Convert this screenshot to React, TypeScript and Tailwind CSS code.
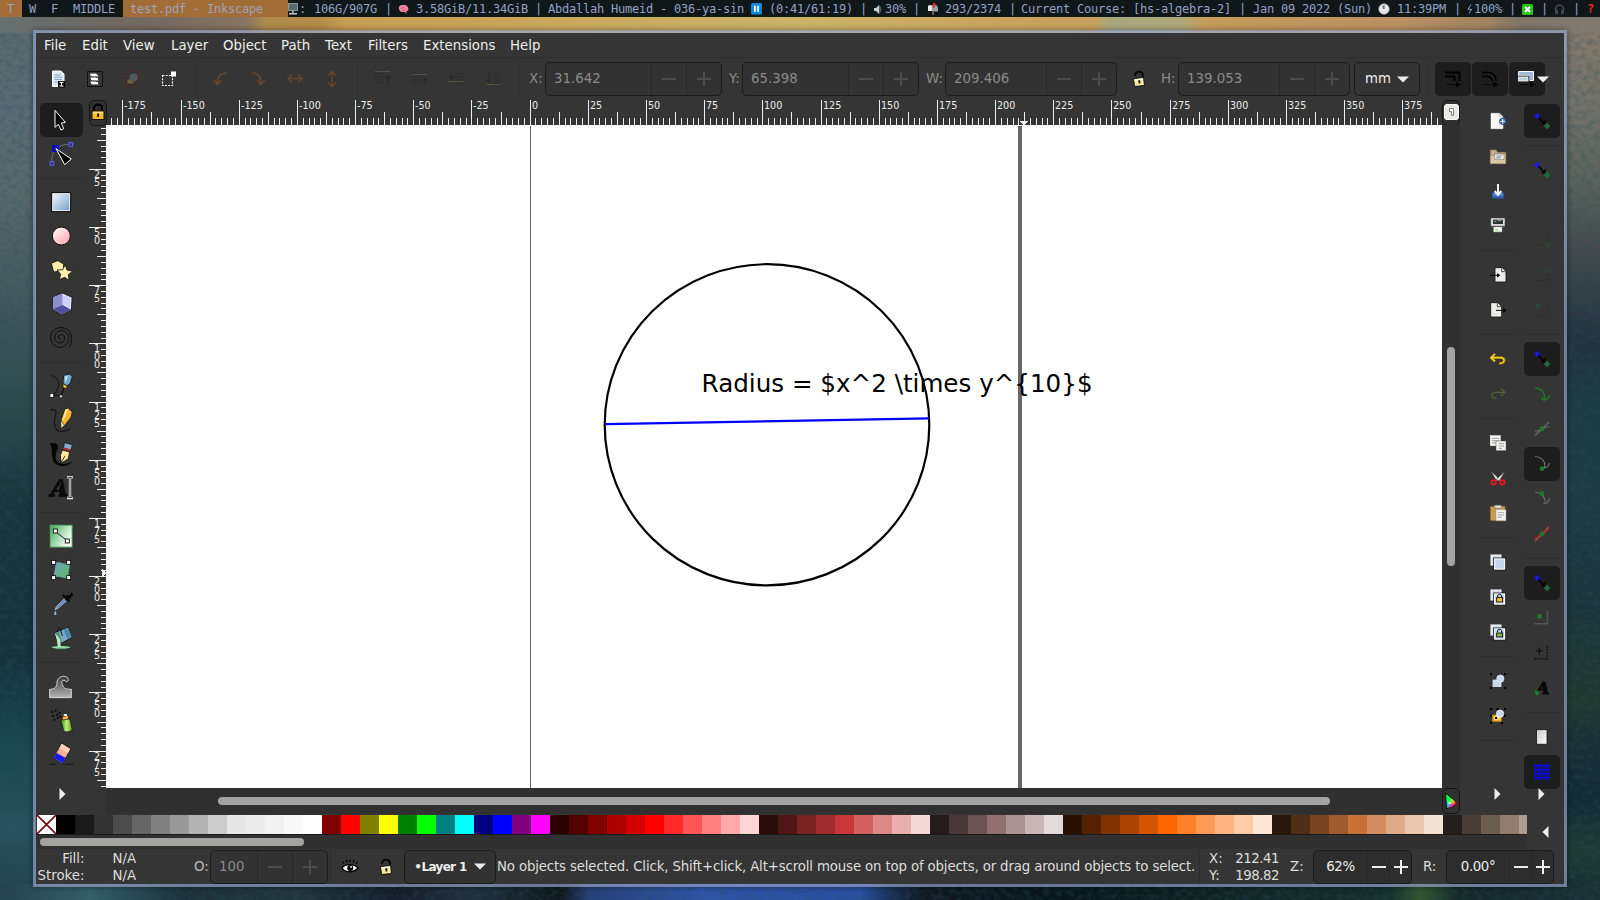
import React from "react";

type Kids = { children?: React.ReactNode };

const SANS = "font-['DejaVu_Sans',sans-serif]";

/* ---------- Wallpaper ---------- */

const stops = (list: [number, string][], span: number) =>
  list.map(([p, c]) => <stop key={p} offset={p / span} stopColor={c} />);

function Wallpaper() {
  return (
    <svg className="absolute inset-0" width="1600" height="900" aria-hidden="true">
      <defs>
        <linearGradient id="wl" x1="0" y1="0" x2="0" y2="1">
          {stops([[17, "#5d6a70"], [100, "#5c6c74"], [180, "#58696b"], [300, "#40575c"], [400, "#2b4a4b"], [500, "#17343a"], [650, "#14323a"], [740, "#1b464e"], [830, "#2a5160"], [900, "#22414c"]], 900)}
        </linearGradient>
        <linearGradient id="wt" x1="0" y1="0" x2="1" y2="0">
          {stops([[0, "#66706f"], [150, "#77695f"], [245, "#8a7560"], [265, "#b38c4a"], [320, "#b98d44"], [345, "#cda052"], [600, "#d0ae5e"], [800, "#d0b766"], [1000, "#cda75c"], [1095, "#c9a45c"], [1110, "#a9aa80"], [1180, "#b0aa7c"], [1205, "#c99e5a"], [1400, "#bd9262"], [1490, "#a08260"], [1520, "#7e7468"], [1600, "#807a70"]], 1600)}
        </linearGradient>
        <linearGradient id="wr" x1="0" y1="0" x2="0" y2="1">
          {stops([[17, "#857a6c"], [95, "#73726a"], [170, "#5b625c"], [230, "#484c4e"], [330, "#22323e"], [400, "#1c3c44"], [500, "#1d3c42"], [600, "#1b343a"], [700, "#20382e"], [730, "#1a3034"], [800, "#122a33"], [850, "#1f3c34"], [900, "#142a30"]], 900)}
        </linearGradient>
        <linearGradient id="wb" x1="0" y1="0" x2="1" y2="0">
          {stops([[0, "#24424c"], [90, "#35606c"], [180, "#1c3238"], [300, "#20343a"], [400, "#161c28"], [470, "#22303c"], [560, "#10181c"], [590, "#27407c"], [700, "#2f55a8"], [860, "#2a50a4"], [890, "#1a3058"], [925, "#101820"], [1060, "#08161a"], [1390, "#16302c"], [1420, "#35582c"], [1460, "#14282c"], [1600, "#1a3034"]], 1600)}
        </linearGradient>
        <filter id="paint" x="0" y="0" width="100%" height="100%">
          <feTurbulence type="fractalNoise" baseFrequency="0.16 0.2" numOctaves="4" seed="7" />
          <feColorMatrix values="0 0 0 0 0.02  0 0 0 0 0.08  0 0 0 0 0.1  1.6 0 0 0 -0.62" />
        </filter>
      </defs>
      <rect width="1600" height="900" fill="#1b343a" />
      <rect x="0" y="17" width="800" height="883" fill="url(#wl)" />
      <rect x="800" y="17" width="800" height="883" fill="url(#wr)" />
      <rect x="0" y="884" width="1600" height="16" fill="url(#wb)" />
      <rect width="1600" height="900" filter="url(#paint)" opacity="0.5" />
      <rect x="0" y="0" width="1600" height="33" fill="url(#wt)" opacity="0.95" />
    </svg>
  );
}

/* ---------- Status bar at the top of the screen ---------- */

const Pipe = () => <span>|</span>;

const Monitor = () => (
  <svg width="11" height="12" viewBox="0 0 11 12">
    <rect x="0.5" y="0.5" width="9" height="7" fill="#5c6b70" stroke="#8c9898" />
    <rect x="4" y="8" width="2" height="2" fill="#999" />
    <rect x="1" y="10" width="8" height="1.5" fill="#c5c5c5" />
  </svg>
);
const Brain = () => (
  <svg width="11" height="11" viewBox="0 0 11 11">
    <path d="M1 5C0 2 3 0.5 5.5 1C8 0.6 10.6 2.5 10.4 5.4C10 7 9 7.4 8 7.2L8.6 10L6.6 8C4 8.2 1.4 8 1 5Z" fill="#f585a4" />
    <path d="M2.5 4.5C4 3 5 5 6.5 3.6M4 6.6C6 5.4 7 6.6 9 5" stroke="#c4506f" strokeWidth="0.8" fill="none" />
  </svg>
);
const Pause = () => (
  <svg width="11" height="12" viewBox="0 0 11 12">
    <rect width="11" height="11.5" rx="1.5" fill="#1287dd" />
    <path d="M3 2.7H4.8V8.8H3ZM6.2 2.7H8V8.8H6.2Z" fill="#fff" />
  </svg>
);
const Speaker = () => (
  <svg width="9" height="11" viewBox="0 0 9 11">
    <path d="M0 4H2L5 1V10L2 7H0Z" fill="#c8ced0" />
    <path d="M5 1C8.2 3 8.2 8 5 10Z" fill="#4a5a60" />
  </svg>
);
const Mailbox = () => (
  <svg width="12" height="12" viewBox="0 0 12 12">
    <path d="M1 3Q3 1 5 3V8H1Z" fill="#eee" />
    <path d="M4.5 2H9Q11 3 11 5V8.5H5Z" fill="#9aa3a8" />
    <path d="M6 0H8.5V3H7.4V5H6Z" fill="#e3242b" />
    <rect x="5" y="8.5" width="2" height="3.5" fill="#8a5a3a" />
  </svg>
);
const Clock = () => (
  <svg width="12" height="12" viewBox="0 0 12 12">
    <circle cx="6" cy="6" r="5.3" fill="#e8e8e8" stroke="#999" strokeWidth="0.8" />
    <path d="M6 6V2.2M6 6L4.6 3" stroke="#444" strokeWidth="0.9" />
  </svg>
);
const GreenCross = () => (
  <svg width="11" height="11" viewBox="0 0 11 11">
    <rect width="11" height="11" rx="1.5" fill="#2cc414" />
    <path d="M3 3L8 8M8 3L3 8" stroke="#fff" strokeWidth="2" />
  </svg>
);
const Headphones = () => (
  <svg width="11" height="11" viewBox="0 0 11 11">
    <path d="M1.5 8V5.5A4 4.3 0 0 1 9.5 5.5V8" fill="none" stroke="#4d535c" strokeWidth="1.3" />
    <rect x="1" y="5.6" width="3" height="5" rx="1" fill="#3c414b" />
    <rect x="7" y="5.6" width="3" height="5" rx="1" fill="#3c414b" />
  </svg>
);

const status: [string, React.ReactNode][] = [
  ["w-[11px]", <Monitor />],
  ["w-[15px]", ":"],
  ["w-[71px]", "106G/907G"],
  ["w-[13px]", <Pipe />],
  ["w-[18px]", <Brain />],
  ["w-[119px]", "3.58GiB/11.34GiB"],
  ["w-[13px]", <Pipe />],
  ["w-[203px]", "Abdallah Humeid - 036-ya-sin"],
  ["w-[18px]", <Pause />],
  ["w-[91px]", "(0:41/61:19)"],
  ["w-[14px]", <Pipe />],
  ["w-[11px]", <Speaker />],
  ["w-[28px]", "30%"],
  ["w-[14px]", <Pipe />],
  ["w-[18px]", <Mailbox />],
  ["w-[64px]", "293/2374"],
  ["w-[12px]", <Pipe />],
  ["w-[218px]", "Current Course: [hs-algebra-2]"],
  ["w-[14px]", <Pipe />],
  ["w-[125px]", "Jan 09 2022 (Sun)"],
  ["w-[19px]", <Clock />],
  ["w-[57px]", "11:39PM"],
  ["w-[13px]", <Pipe />],
  ["w-[7px]", <svg width="6" height="10" viewBox="0 0 6 10"><path d="M4 0.5L1 5.3H4.6L2 9.5" fill="none" stroke="#93a1c4" strokeWidth="1" /></svg>],
  ["w-[35px]", "100%"],
  ["w-[13px]", <Pipe />],
  ["w-[19px]", <GreenCross />],
  ["w-[13px]", <Pipe />],
  ["w-[19px]", <Headphones />],
  ["w-[14px]", <Pipe />],
  ["w-[10px]", <span className="font-bold text-[#e8252b]">?</span>],
];

function TopBar() {
  return (
    <header className="relative flex h-[17px] shrink-0 items-center overflow-hidden whitespace-pre bg-[#0f1718] font-['DejaVu_Sans_Mono',monospace] text-[12px] leading-[17px] tracking-[-0.224px] text-[#93a1c4]">
      <span className="h-[17px] w-[22px] shrink-0 bg-[#a36d38] pl-[7px] pt-px">T</span>
      <span className="h-[17px] w-[22px] shrink-0 pl-[7px] pt-px">W</span>
      <span className="h-[17px] w-[22px] shrink-0 pl-[7px] pt-px">F</span>
      <span className="h-[17px] w-[57px] shrink-0 pl-[7px] pt-px">MIDDLE</span>
      <span className="h-[17px] w-[165px] shrink-0 bg-[#a36d38] pl-[7px] pt-px text-[#9ba3bd]">test.pdf - Inkscape</span>
      {status.map(([w, c], i) => (
        <span key={i} className={`${w} flex h-[17px] shrink-0 items-center pt-px`}>{c}</span>
      ))}
    </header>
  );
}

/* ---------- Small building blocks ---------- */

function Ic({ vb, s, children }: Kids & { vb: string; s: number }) {
  return (
    <svg width={s} height={s} viewBox={vb} fill="none" className="shrink-0">
      {children}
    </svg>
  );
}

const Minus = ({ c }: { c: string }) => (
  <svg width="14" height="14" viewBox="0 0 14 14"><path d="M0 7H14" stroke={c} strokeWidth="2" /></svg>
);
const Plus = ({ c }: { c: string }) => (
  <svg width="14" height="14" viewBox="0 0 14 14"><path d="M0 7H14M7 0V14" stroke={c} strokeWidth="2" /></svg>
);
const CaretDown = () => (
  <svg width="12" height="7" viewBox="0 0 12 7" className="shrink-0"><path d="M0 0.5H12L6 6.5Z" fill="#eeeeec" /></svg>
);

function Spin({ w, bw, value, on }: { w: string; bw: string; value: string; on?: boolean }) {
  const c = on ? "#eeeeec" : "#4c4c4c";
  return (
    <div className={`${w} ${on ? "bg-[#2d2d2d] tracking-[-0.4px] text-[#eeeeec]" : "bg-[#323232] text-[#8a8b8a]"} flex h-[34px] shrink-0 items-stretch overflow-hidden rounded-[5px] border border-[#1b1b1b]`}>
      <div className={`flex flex-1 items-center ${on ? "justify-center" : "pl-[8px]"}`}>{value}</div>
      <div className={`${bw} flex items-center justify-center border-l border-[#272727]`}><Minus c={c} /></div>
      <div className={`${bw} flex items-center justify-center border-l border-[#272727]`}><Plus c={c} /></div>
    </div>
  );
}

const VSep = () => (
  <div className="flex h-[34px] w-[14px] shrink-0 justify-center"><div className="w-px bg-[#2f2f2f]" /></div>
);

const Lock = () => (
  <svg width="14" height="18" viewBox="0 0 14 18" className="shrink-0">
    <path d="M3 6C3 1 10 0 11 5V8" fill="none" stroke="#0a0a0a" strokeWidth="2" />
    <path d="M1.5 8.5L11.5 7.5L12.5 15.5L2.5 16.5Z" fill="#f6e9a2" stroke="#111" />
    <path d="M2.4 9.3L11 8.5L11.3 10L2.5 11Z" fill="#fffbe0" />
    <path d="M6.3 10.3H8.3V13.6H6.6Z" fill="#111" />
  </svg>
);

/* ---------- Menu bar and tool controls ---------- */

const menus: [string, string][] = [
  ["w-[38px]", "File"], ["w-[41px]", "Edit"], ["w-[48px]", "View"], ["w-[52px]", "Layer"], ["w-[58px]", "Object"],
  ["w-[44px]", "Path"], ["w-[43px]", "Text"], ["w-[55px]", "Filters"], ["w-[87px]", "Extensions"], ["w-[50px]", "Help"],
];

function MenuBar() {
  return (
    <nav className="flex h-[25px] shrink-0 items-center border-b border-[#2e2e2e] pl-[8px] pt-[2px] text-[#eeeeec]">
      {menus.map(([w, m]) => <span key={m} className={w}>{m}</span>)}
    </nav>
  );
}

const Cell = ({ children }: Kids) => (
  <div className="flex h-[34px] w-[37px] shrink-0 items-center justify-center">{children}</div>
);

function AlignIcon({ kind }: { kind: number }) {
  const bar = [1.5, 4.5, 11.5, 14.5][kind];
  const barColor = kind < 2 ? "#505050" : "#574f38";
  return (
    <svg width="18" height="18" viewBox="0 0 18 18">
      <g stroke="#2e2e2e" strokeWidth="1.2">
        {[4, 7, 10, 13].map((y) => <path key={y} d={kind < 2 ? `M1 ${y}H10` : `M8 ${y}H16`} />)}
      </g>
      <path d={`M1 ${bar}H16`} stroke={barColor} strokeWidth="1" />
      {kind === 0 && <path d="M14 16V6M11.5 8.5L14 6L16.5 8.5" stroke="#282828" strokeWidth="1.1" fill="none" />}
      {kind === 1 && <path d="M11 14H14V9M12 10.5L14 8.5L16 10.5" stroke="#282828" strokeWidth="1.1" fill="none" />}
      {kind === 2 && <path d="M7 7H2M4 5L1.8 7L4 9.5" stroke="#282828" strokeWidth="1.1" fill="none" />}
      {kind === 3 && <path d="M4 1V12M1.8 9.5L4 12L6.5 9.5" stroke="#282828" strokeWidth="1.1" fill="none" />}
    </svg>
  );
}

const dim = { stroke: "#67452a", strokeWidth: 1.6, fill: "none" } as const;

function ToolControls() {
  return (
    <div className="flex h-[42px] shrink-0 items-center pl-[4px] text-[#8a8b8a]">
      <Cell>
        <svg width="16" height="18" viewBox="0 0 16 18">
          <path d="M1.5 1H10L13 4V16.5H1.5Z" fill="#dfeaf5" stroke="#fff" />
          <path d="M3.5 5H10M3.5 7.3H11M3.5 9.6H11M3.5 12H8" stroke="#7ea3c8" strokeWidth="1" />
          <rect x="7" y="11" width="7" height="6.5" fill="#0c0c0c" />
          <path d="M8.5 12.5H12.5M8.5 16H12.5M10.5 12.5V16" stroke="#fff" strokeWidth="1" />
        </svg>
      </Cell>
      <Cell>
        <svg width="18" height="18" viewBox="0 0 18 18" className="-ml-px">
          <rect x="1.5" y="1.5" width="15" height="15" fill="none" stroke="#000" strokeDasharray="2 1" />
          <path d="M4 3.5H10L13 6.5H6ZM4 7.5H10L13 10.5H6ZM4 11.5H10L13 14.5H6Z" fill="#ddd" />
          <path d="M4.5 5H11M5 9H12M5 13H12" stroke="#fff" strokeWidth="1.8" />
        </svg>
      </Cell>
      <Cell>
        <svg width="18" height="18" viewBox="0 0 18 18" className="-ml-px">
          <rect x="1.5" y="1.5" width="15" height="15" fill="none" stroke="#5e2b2b" strokeDasharray="2 1.2" />
          <rect x="4" y="9" width="7" height="5" fill="#6b6040" stroke="#222" strokeWidth="0.6" />
          <circle cx="10.5" cy="7.5" r="4" fill="#555a60" />
        </svg>
      </Cell>
      <Cell>
        <svg width="18" height="18" viewBox="0 0 18 18" className="-ml-px">
          <rect x="2.5" y="5.5" width="10" height="10" fill="none" stroke="#f4f4f4" strokeWidth="1.2" strokeDasharray="2 1.2" />
          <rect x="11" y="1.5" width="5" height="5" fill="#fff" />
        </svg>
      </Cell>
      <VSep />
      <Cell><svg width="18" height="18" viewBox="0 0 18 18"><path d="M15 3C8 3 5.5 6 5.5 14M1.5 10L5.5 14.5L9.5 10.5" {...dim} /></svg></Cell>
      <Cell><svg width="18" height="18" viewBox="0 0 18 18"><path d="M3 3C9 3 12 6 12 14M8 10.5L12 14.5L16 10" {...dim} /></svg></Cell>
      <Cell><svg width="18" height="18" viewBox="0 0 18 18"><path d="M2.5 8.5H15.5M6 4.5L2 8.5L6 12.5M12 4.5L16 8.5L12 12.5" {...dim} /></svg></Cell>
      <Cell><svg width="18" height="18" viewBox="0 0 18 18"><path d="M9 2V16M5 5.5L9 1.5L13 5.5M5 12.5L9 16.5L13 12.5" {...dim} /></svg></Cell>
      <VSep />
      {[0, 1, 2, 3].map((k) => <Cell key={k}><AlignIcon kind={k} /></Cell>)}
      <VSep />
      <span className="w-[19px] pl-[3px]">X:</span>
      <Spin w="w-[177px]" bw="w-[35px]" value="31.642" />
      <span className="w-[20px] pl-[7px]">Y:</span>
      <Spin w="w-[177px]" bw="w-[35px]" value="65.398" />
      <span className="w-[26px] pl-[7px]">W:</span>
      <Spin w="w-[172px]" bw="w-[35px]" value="209.406" />
      <div className="flex w-[44px] justify-center"><Lock /></div>
      <span className="w-[17px]">H:</span>
      <Spin w="w-[172px]" bw="w-[35px]" value="139.053" />
      <div className="ml-[4px] flex h-[34px] w-[66px] shrink-0 items-center justify-center gap-[6px] rounded-[5px] border border-[#1b1b1b] bg-[#343434] text-[#eeeeec]">
        mm <CaretDown />
      </div>
      <VSep />
      <div className="flex shrink-0 gap-px pl-[1px]">
        <div className="flex h-[34px] w-[36px] items-center justify-center rounded-[5px] bg-[#1d1d1d]">
          <svg width="18" height="18" viewBox="0 0 18 18"><path d="M1 2.5H15.5V11M1 6.5H10.5V11" stroke="#000" strokeWidth="2" fill="none" /><path d="M3 14.5H13" stroke="#000" strokeWidth="1.2" strokeDasharray="2 1" /><path d="M12 11.5L17 14.5L12 17.5Z" fill="#000" /></svg>
        </div>
        <div className="flex h-[34px] w-[36px] items-center justify-center rounded-[5px] bg-[#1d1d1d]">
          <svg width="18" height="18" viewBox="0 0 18 18"><path d="M1 2.5H8Q15 3 15 11M1 6.5H6Q11 7 11 11" stroke="#000" strokeWidth="1.6" fill="none" /><path d="M3 14.5H13" stroke="#000" strokeWidth="1.2" strokeDasharray="2 1" /><path d="M12 11.5L17 14.5L12 17.5Z" fill="#000" /></svg>
        </div>
        <div className="flex h-[34px] w-[36px] items-center rounded-[5px] bg-[#1d1d1d] pl-[9px]">
          <svg width="18" height="18" viewBox="0 0 18 18" className="shrink-0"><path d="M0.5 1.5H15.5V10.5H11.5V5.5H0.5Z" fill="#9dbbd8" stroke="#fff" /><path d="M1 6.2H11V11" stroke="#222" fill="none" /><rect x="0.5" y="7" width="9.5" height="4" fill="#b9d0e6" stroke="#fff" strokeWidth="0.8" /><path d="M3 14.5H13" stroke="#000" strokeWidth="1.2" strokeDasharray="2 1" /><path d="M12 11.5L17 14.5L12 17.5Z" fill="#000" /></svg>
          <span className="ml-px shrink-0"><CaretDown /></span>
        </div>
      </div>
    </div>
  );
}

/* ---------- Toolbox ---------- */

type Item = { on?: boolean; el: React.ReactNode } | "sep";

const T = ({ y, children }: Kids & { y: number }) => <Ic s={28} vb={`143 ${y} 84 84`}>{children}</Ic>;

const tools: Item[] = [
  { on: true, el: <T y={18}><path d="M164 31V82L174 73L182 90L190 86L183 69L195 67Z" fill="#000" stroke="#fff" strokeWidth="3" /></T> },
  {
    el: (
      <T y={120}>
        <path d="M154 184C154 150 172 134 205 133" stroke="#6d6d6d" strokeWidth="3" />
        <rect x="206" y="128" width="11" height="11" stroke="#5a5ae6" strokeWidth="3.5" fill="#333370" />
        <rect x="149" y="185" width="11" height="11" stroke="#5a5ae6" strokeWidth="3.5" fill="#333370" />
        <rect x="158" y="137" width="17" height="17" stroke="#0000d8" strokeWidth="4" fill="#1a1a90" />
        <path d="M167 146L213 177L193 194Z" fill="#000" stroke="#fff" strokeWidth="3" />
      </T>
    ),
  },
  "sep",
  {
    el: (
      <T y={264}>
        <defs><linearGradient id="gb" x1="0" y1="0" x2="1" y2="1"><stop offset="0" stopColor="#eef4fa" /><stop offset="1" stopColor="#7ba4cc" /></linearGradient></defs>
        <rect x="154" y="278" width="57" height="57" fill="#fff" stroke="#000" strokeWidth="3" />
        <rect x="158" y="282" width="49" height="49" fill="url(#gb)" />
      </T>
    ),
  },
  {
    el: (
      <T y={366}>
        <defs><linearGradient id="gp" x1="0" y1="0" x2="1" y2="1"><stop offset="0" stopColor="#fff" /><stop offset="1" stopColor="#ff9fa8" /></linearGradient></defs>
        <circle cx="183" cy="408" r="27" fill="url(#gp)" stroke="#111" strokeWidth="3" />
      </T>
    ),
  },
  {
    el: (
      <T y={468}>
        <path d="M153 490L172 482L190 492L190 512L160 516Z" fill="#fbeeaa" stroke="#111" strokeWidth="2.5" />
        <path d="M194 494L200 510L217 514L204 524L206 541L193 532L177 539L181 523L170 510L187 509Z" fill="#fff2ae" stroke="#111" strokeWidth="2.5" />
      </T>
    ),
  },
  {
    el: (
      <T y={570}>
        <path d="M186 579L215 592L213 630L184 644L156 628L157 591Z" fill="#b9b9ea" stroke="#111" strokeWidth="2.5" />
        <path d="M187 581L213 593L212 628L187 615Z" fill="#e4e4ff" />
        <path d="M158 592L186 581V615L158 627Z" fill="#8d8dd0" />
        <path d="M187 615L212 629L184 642L158 627Z" fill="#4e4e9c" />
        <path d="M187 585L210 595L209 622L187 612Z" fill="#cfcff8" />
      </T>
    ),
  },
  { el: <T y={672}><path d="M182 716C178 720 172 714 175 708C180 700 192 704 193 714C194 727 178 733 169 726C158 716 164 698 176 693C190 688 204 698 205 712C206 730 192 744 176 742C160 740 150 726 151 708C153 692 168 682 184 683C202 684 214 698 214 716C214 728 210 738 206 742" stroke="#0e0e0e" strokeWidth="3" /></T> },
  "sep",
  {
    el: (
      <T y={816}>
        <path d="M152 826C176 836 180 850 172 866C168 876 160 884 156 886H176" stroke="#1a1a1a" strokeWidth="3.5" />
        <path d="M190 826L208 822L216 830L210 850L200 858L188 850Z" fill="#6fa9cf" stroke="#111" strokeWidth="2.5" />
        <path d="M194 830L203 826L196 848Z" fill="#d8ecf8" />
        <path d="M188 851L201 858L197 866L188 862Z" fill="#f6c34a" stroke="#111" strokeWidth="2" />
        <path d="M191 864L182 888" stroke="#000" strokeWidth="3" />
        <rect x="149" y="881" width="11" height="11" fill="#fff" stroke="#000" strokeWidth="2" />
        <circle cx="182" cy="889" r="3" fill="#fff" />
      </T>
    ),
  },
  {
    el: (
      <T y={918}>
        <path d="M150 930C164 926 170 932 166 944C160 958 160 980 170 990C180 998 200 994 210 986" stroke="#161616" strokeWidth="3.5" />
        <path d="M194 926L204 924L216 936L212 952L192 978L182 984L180 966Z" fill="#f9b62b" stroke="#111" strokeWidth="2.5" />
        <path d="M196 928L203 927L192 956L184 964Z" fill="#ffe9a0" />
        <path d="M181 960L192 976L182 986Z" fill="#fff3cf" stroke="#111" strokeWidth="2" />
      </T>
    ),
  },
  {
    el: (
      <T y={1020}>
        <path d="M148 1030C164 1026 176 1032 172 1046C166 1062 162 1076 172 1086C184 1096 204 1092 216 1084C206 1102 176 1102 162 1088C150 1074 160 1044 148 1030Z" fill="#050505" />
        <path d="M192 1028L216 1034L212 1050L190 1044Z" fill="#7fb0d4" stroke="#111" strokeWidth="2" />
        <path d="M190 1043L210 1048L208 1054L188 1048Z" fill="#c22" />
        <path d="M186 1050L208 1056L204 1076L182 1090L180 1066Z" fill="#fbe69a" stroke="#111" strokeWidth="2.5" />
        <path d="M182 1088L194 1068" stroke="#111" strokeWidth="2.5" />
      </T>
    ),
  },
  {
    el: (
      <T y={1122}>
        <text x="151" y="1189" fontFamily="DejaVu Serif, serif" fontWeight="bold" fontStyle="italic" fontSize="66" fill="#0a0a0a" stroke="#0a0a0a" strokeWidth="4">A</text>
        <path d="M182 1148L172 1172" stroke="#555" strokeWidth="2" />
        <path d="M200 1132H207L209 1134L211 1132H218M209 1133V1193M200 1194H207L209 1192L211 1194H218" stroke="#fff" strokeWidth="7" />
        <path d="M201 1133H217M209 1133V1193M201 1193H217" stroke="#000" strokeWidth="2.2" />
      </T>
    ),
  },
  "sep",
  {
    el: (
      <T y={126}>
        <defs><linearGradient id="gg" x1="0" y1="0" x2="1" y2="0.6"><stop offset="0" stopColor="#3fae55" /><stop offset="1" stopColor="#fff" /></linearGradient></defs>
        <rect x="150" y="136" width="65" height="65" fill="url(#gg)" stroke="#5cb868" strokeWidth="3" />
        <path d="M169 158L197 179" stroke="#222" strokeWidth="3" />
        <rect x="159" y="147" width="12" height="12" fill="#fff" stroke="#222" strokeWidth="3" />
        <rect x="195" y="177" width="12" height="12" fill="#fff" stroke="#222" strokeWidth="3" />
      </T>
    ),
  },
  {
    el: (
      <T y={228}>
        <defs><linearGradient id="gm" x1="0" y1="0" x2="1" y2="1"><stop offset="0" stopColor="#74a2bd" /><stop offset="1" stopColor="#58b868" /></linearGradient></defs>
        <path d="M164 250C176 240 188 256 208 250C210 264 202 276 206 294C190 298 180 286 162 292C158 276 168 266 164 250Z" fill="url(#gm)" />
        {[[154, 241], [199, 241], [154, 287], [199, 287]].map(([x, y]) => <rect key={`${x}${y}`} x={x} y={y} width="12" height="12" fill="#fff" stroke="#000" strokeWidth="2.5" />)}
      </T>
    ),
  },
  {
    el: (
      <T y={330}>
        <path d="M194 354L168 380L164 389L173 385L201 360Z" fill="#5f8fc4" stroke="#c4d8ec" strokeWidth="2" />
        <path d="M189 347L206 363" stroke="#0a0a0a" strokeWidth="7" strokeLinecap="round" />
        <path d="M200 355L211 344" stroke="#0a0a0a" strokeWidth="14" strokeLinecap="round" />
        <path d="M204 344L211 339" stroke="#777" strokeWidth="3" />
        <path d="M165 392C160 400 160 405 165 405C170 405 169 399 165 392Z" fill="#86b8e8" />
      </T>
    ),
  },
  {
    el: (
      <T y={432}>
        <ellipse cx="182" cy="502" rx="30" ry="5.5" fill="#8fd8a0" stroke="#111" strokeWidth="2" />
        <path d="M163 458L204 441L216 472L184 489L168 478Z" fill="#7ba9c9" stroke="#111" strokeWidth="2.5" />
        <path d="M190 449L203 444L213 470L200 477Z" fill="#4f86a8" />
        <path d="M164 458L176 456L184 486L174 480Z" fill="#4f8f78" />
        <path d="M160 460C166 464 170 474 172 500H181C180 484 182 478 170 466Z" fill="#b8ecc4" />
        <path d="M172 456C170 446 176 440 180 446L186 468" stroke="#111" strokeWidth="3" />
      </T>
    ),
  },
  "sep",
  {
    el: (
      <T y={576}>
        <defs><linearGradient id="gw" x1="0" y1="0" x2="0" y2="1"><stop offset="0" stopColor="#3a3a3a" /><stop offset="1" stopColor="#b5b5b5" /></linearGradient></defs>
        <path d="M148 653V628C166 628 170 618 170 606C172 590 194 582 204 596C206 604 198 608 194 602C186 598 182 606 186 614C190 626 198 628 213 628V653Z" fill="url(#gw)" stroke="#e4e4e4" strokeWidth="2.6" />
      </T>
    ),
  },
  {
    el: (
      <T y={678}>
        <defs><linearGradient id="gs" x1="0" y1="0" x2="1" y2="0"><stop offset="0" stopColor="#3f8a10" /><stop offset="0.5" stopColor="#bff07a" /><stop offset="1" stopColor="#4a9a1a" /></linearGradient></defs>
        <path d="M182 722C188 713 205 713 209 720L216 750C205 757 196 757 190 752Z" fill="url(#gs)" stroke="#111" strokeWidth="2" />
        <path d="M186 710L204 706V718L186 720Z" fill="#f6b73c" stroke="#111" strokeWidth="2" />
        <path d="M190 702H200V708H190Z" fill="#eee" />
        {[[155, 696], [166, 692], [178, 698], [158, 708], [170, 704], [180, 710], [162, 719], [172, 714]].map(([x, y]) => <circle key={`${x}${y}`} cx={x} cy={y} r="3" fill="#060606" />)}
      </T>
    ),
  },
  {
    el: (
      <T y={780}>
        <path d="M184 789L212 806L186 852L158 834Z" fill="#f5b193" stroke="#111" strokeWidth="2.5" />
        <path d="M184 792L209 807L202 819L177 804Z" fill="#fbd0bc" />
        <path d="M169 819L196 834L186 850L160 833Z" fill="#1818f0" />
        <path d="M147 853H166M195 853H218" stroke="#0a0a0a" strokeWidth="2.5" />
      </T>
    ),
  },
];

const RightArrow = () => (
  <svg width="7" height="12" viewBox="0 0 7 12"><path d="M0.5 0L6.5 6L0.5 12Z" fill="#eeeeec" /></svg>
);

function Toolbox() {
  return (
    <aside className="flex w-[52px] shrink-0 flex-col pl-[4px] pt-[3px]">
      {tools.map((t, i) =>
        t === "sep" ? (
          <div key={i} className="flex h-[14px] w-[43px] items-center"><div className="h-px w-full bg-[#2d2d2d]" /></div>
        ) : (
          <div key={i} className={`flex h-[34px] w-[43px] items-center justify-center rounded-[5px] ${t.on ? "bg-[#1d1d1d]" : ""}`}>{t.el}</div>
        )
      )}
      <div className="mt-[17px] flex w-[43px] justify-center pl-px"><RightArrow /></div>
    </aside>
  );
}

/* ---------- Rulers and canvas ---------- */

const STEP = 5.8182;

function HRuler() {
  const ticks = [];
  for (let k = -73; k <= 156; k++) {
    const x = Math.round(530 + k * STEP - 106 - 0.4);
    if (x < 0 || x > 1334) continue;
    const major = k % 10 === 0;
    const top = major ? 0 : k % 5 === 0 ? 12 : 18;
    ticks.push(<rect key={k} x={x} y={top} width="1" height={25 - top} fill="#eeeeec" />);
    if (major) ticks.push(<text key={`t${k}`} x={x + 2} y="9" fontSize="9.6" fill="#eeeeec">{k * 2.5}</text>);
  }
  return (
    <svg width="1336" height="25" className={`${SANS} shrink-0`} shapeRendering="crispEdges">
      {ticks}
      <path d="M913 21H923L918 25.5Z" fill="#eeeeec" />
    </svg>
  );
}

function VRuler() {
  const ticks = [];
  for (let k = 3; k <= 116; k++) {
    const y = Math.round(111 + k * STEP - 126.4);
    if (y < 1 || y > 661) continue;
    const major = k % 10 === 0;
    const left = major ? 1 : k % 5 === 0 ? 9 : 13;
    ticks.push(<rect key={k} x={left} y={y} width={18 - left} height="1" fill="#eeeeec" />);
    if (major)
      String(k * 2.5).split("").forEach((d, i) =>
        ticks.push(<text key={`${k}-${i}`} x="5.9" y={y + 9 + i * 8} fontSize="9.6" fill="#eeeeec">{d}</text>)
      );
  }
  return (
    <svg width="18" height="662" className={`${SANS} shrink-0`} shapeRendering="crispEdges">
      {ticks}
      <path d="M14 442L18.5 447L14 452Z" fill="#eeeeec" />
    </svg>
  );
}

function Canvas() {
  return (
    <svg width="1336" height="663" viewBox="106 125 1336 663" className="shrink-0 bg-white">
      <rect x="530" y="126" width="1" height="662" fill="#666" />
      <rect x="1018" y="126" width="4" height="662" fill="#666" />
      <ellipse cx="767" cy="424.8" rx="162.3" ry="160.6" fill="none" stroke="#000" strokeWidth="2.2" />
      <path d="M605.5 424.2L929 418.3" stroke="#0000ff" strokeWidth="2.2" />
      <text x="701.6" y="392.3" fontSize="24.7" fontFamily="DejaVu Sans, sans-serif" textLength="391" lengthAdjust="spacingAndGlyphs">{"Radius = $x^2 \\times y^{10}$"}</text>
    </svg>
  );
}

const CornerBtn = ({ children }: Kids) => (
  <div className="flex h-[26px] w-[18px] shrink-0 items-center justify-center rounded-[5px] border border-[#161616] bg-[#303030]">{children}</div>
);

function Work() {
  return (
    <section className="flex w-[1372px] shrink-0 flex-col">
      <div className="flex h-[25px]">
        <div className="w-[18px] shrink-0 pl-px">
          <CornerBtn>
            <svg width="14" height="18" viewBox="0 0 14 18" className="mb-[3px] shrink-0">
              <path d="M3 8V5C3 0.5 11 0.5 11 5V8" fill="none" stroke="#000" strokeWidth="2.2" />
              <rect x="1" y="8" width="12" height="8.5" fill="#f9b928" stroke="#111" />
              <path d="M2 9.5H12" stroke="#ffe680" strokeWidth="1.5" />
              <rect x="6.2" y="10.5" width="1.8" height="3.4" fill="#111" />
            </svg>
          </CornerBtn>
        </div>
        <HRuler />
        <CornerBtn>
          <svg width="15" height="17" viewBox="0 0 15 17" className="mb-px shrink-0">
            <rect x="0.5" y="0.5" width="14" height="15" rx="2.5" fill="#e9e9e6" stroke="#fff" />
            <path d="M5.5 4.5H9.5V11.5H7.5V7.5H5.5Z" fill="#fff" stroke="#777" strokeWidth="0.9" />
          </svg>
        </CornerBtn>
      </div>
      <div className="flex h-[663px]">
        <div className="flex w-[18px] items-end"><VRuler /></div>
        <Canvas />
        <div className="flex w-[18px] flex-col items-center bg-[#303030] pt-[222px]">
          <div className="h-[219px] w-[8px] rounded-full bg-[#a3a3a1]" />
        </div>
      </div>
      <div className="flex h-[26px] pl-[18px]">
        <div className="flex h-[26px] w-[1336px] items-center bg-[#303030] pl-[112px]">
          <div className="h-[8px] w-[1112px] rounded-full bg-[#a3a3a1]" />
        </div>
        <CornerBtn>
          <svg width="14" height="18" viewBox="0 0 14 18" className="mr-px shrink-0">
            <defs>
              <linearGradient id="c1" x1="0.2" y1="0" x2="0.5" y2="1"><stop offset="0" stopColor="#1f0" /><stop offset="0.45" stopColor="#0f6" /><stop offset="0.7" stopColor="#0cf" /><stop offset="1" stopColor="#00f" /></linearGradient>
              <linearGradient id="c2" x1="0.3" y1="0.4" x2="1" y2="0.7"><stop offset="0" stopColor="#ff0" stopOpacity="0" /><stop offset="0.45" stopColor="#fc0" stopOpacity="0.8" /><stop offset="0.8" stopColor="#f00" /></linearGradient>
            </defs>
            <path d="M1.5 0.8L13.5 11.5L2.5 17Z" fill="url(#c1)" stroke="#0a0a0a" strokeWidth="1" />
            <path d="M1.5 0.8L13.5 11.5L2.5 17Z" fill="url(#c2)" />
            <path d="M4 16L6.5 11.5L11.5 12.2Z" fill="#f0f" opacity="0.75" />
            <circle cx="5.6" cy="11" r="1.2" fill="#fff" opacity="0.7" />
          </svg>
        </CornerBtn>
      </div>
    </section>
  );
}

/* ---------- Commands bar ---------- */

const C = ({ y, children }: Kids & { y: number }) => <Ic s={24} vb={`168 ${y} 72 72`}>{children}</Ic>;

const Pages = ({ y }: { y: number }) => (
  <>
    <rect x="183" y={y} width="30" height="30" fill="#cfdceb" stroke="#fff" strokeWidth="3" />
    <rect x="191" y={y + 9} width="36" height="36" fill="#dbe7f3" stroke="#111" strokeWidth="2.5" />
    <rect x="194" y={y + 12} width="30" height="30" fill="#c4d6ea" stroke="#fff" strokeWidth="2.5" />
  </>
);

const commands: Item[] = [
  { el: <C y={42}><path d="M183 55H208L219 65V101H183Z" fill="#f7f7f5" stroke="#fff" strokeWidth="1.5" /><path d="M208 55V65H219" stroke="#aaa" strokeWidth="2" /><circle cx="218" cy="79" r="10" fill="#3465a4" stroke="#204a87" strokeWidth="1.5" /><path d="M211 79H225M218 72V86" stroke="#fff" strokeWidth="3" /></C> },
  { el: <C y={147}><path d="M181 165H198L202 172H227V206H181Z" fill="#c8b08c" stroke="#8d7a58" strokeWidth="2" /><path d="M181 182H190L194 176H227V206H181Z" fill="#dcc8a6" stroke="#8d7a58" strokeWidth="1.5" /><path d="M194 177H222V193H194Z" fill="#f4f4f0" stroke="#777" strokeWidth="2" /><path d="M199 183H217M199 188H212" stroke="#555" strokeWidth="2" /></C> },
  { el: <C y={252}><path d="M187 293H221V310H187Z" fill="#5b8fd6" stroke="#234a87" strokeWidth="2.5" /><path d="M188 302H220V309H188Z" fill="#2f62b0" /><path d="M204 267V296M194 288L204 300L214 288" stroke="#f2f2f2" strokeWidth="6" /></C> },
  { el: <C y={357}><path d="M184 371H223V395H184Z" fill="#dcdcd8" stroke="#f4f4f4" strokeWidth="2" /><path d="M189 374H219V387H189Z" fill="#2d3436" /><path d="M193 379H199M203 377H214" stroke="#ddd" strokeWidth="2" /><path d="M183 394H224" stroke="#333" strokeWidth="3" /><path d="M191 396H216V411H191Z" fill="#fff" stroke="#999" strokeWidth="1.5" /><path d="M195 403H206M195 408H212" stroke="#a3cf8a" strokeWidth="3" /></C> },
  "sep",
  { el: <C y={504}><path d="M195 518H216L228 530V561H195Z" fill="#ececea" stroke="#111" strokeWidth="2.5" /><path d="M215 518V530H227" stroke="#222" strokeWidth="2.5" fill="#fff" /><path d="M180 541H204" stroke="#000" strokeWidth="3" /><path d="M201 534L211 541L201 548Z" fill="#000" /></C> },
  { el: <C y={609}><path d="M182 623H203L215 635V666H182Z" fill="#ececea" stroke="#111" strokeWidth="2.5" /><path d="M202 623V635H214" stroke="#222" strokeWidth="2.5" fill="#fff" /><path d="M198 646H222" stroke="#000" strokeWidth="3" /><path d="M219 639L229 646L219 653Z" fill="#000" /></C> },
  "sep",
  { el: <C y={756}><path d="M183 788H212C228 788 228 806 208 806M195 776L183 788L195 800" stroke="#7a5a00" strokeWidth="8" /><path d="M183 788H212C226 788 226 805 208 805M195 777L183 788L195 799" stroke="#f2cf2a" strokeWidth="5" /></C> },
  { el: <C y={861}><path d="M224 892H198C180 892 182 910 200 910M213 881L225 892L213 903" stroke="#4c6334" strokeWidth="4" /></C> },
  "sep",
  { el: <C y={1008}><rect x="181" y="1022" width="30" height="30" fill="#f4f4f2" stroke="#fff" strokeWidth="1.5" /><path d="M186 1030H206M186 1037H206M186 1044H198" stroke="#8a8a8a" strokeWidth="2.5" /><rect x="198" y="1038" width="30" height="29" fill="#f4f4f2" stroke="#555" strokeWidth="1.5" /><path d="M206 1046H222M206 1053H222M206 1060H216" stroke="#8a8a8a" strokeWidth="2.5" /></C> },
  { el: <C y={1113}><path d="M182 1127L210 1154L200 1158Z" fill="#f0f0f0" stroke="#222" strokeWidth="1.5" /><path d="M226 1127L198 1154L208 1158Z" fill="#e2e2e2" stroke="#222" strokeWidth="1.5" /><circle cx="191" cy="1162" r="6.5" stroke="#e0181c" strokeWidth="6" /><circle cx="217" cy="1162" r="6.5" stroke="#e0181c" strokeWidth="6" /></C> },
  { el: <C y={63}><path d="M181 79H225V122H181Z" fill="#c99a50" stroke="#8a6526" strokeWidth="2" /><path d="M194 84H214V76H194Z" fill="#eee" stroke="#777" strokeWidth="2" /><path d="M198 89H228V122H198Z" fill="#f4f4f2" stroke="#999" strokeWidth="1.5" /><path d="M203 98H222M203 105H222M203 112H216" stroke="#999" strokeWidth="2.5" /></C> },
  "sep",
  { el: <C y={210}><Pages y={225} /></C> },
  { el: <C y={315}><Pages y={330} /><path d="M203 354V348C203 341 215 341 215 348V354" stroke="#000" strokeWidth="3" /><rect x="200" y="353" width="18" height="13" fill="#f8c030" stroke="#000" strokeWidth="2.5" /></C> },
  { el: <C y={420}><Pages y={435} /><path d="M203 456V452C203 446 215 446 215 453V459" stroke="#000" strokeWidth="3" /><rect x="200" y="459" width="18" height="12" fill="#86b84a" stroke="#000" strokeWidth="2.5" /></C> },
  "sep",
  { el: <C y={567}><rect x="189" y="600" width="24" height="20" fill="#c9d7ea" stroke="#eee" strokeWidth="2" /><circle cx="211" cy="596" r="11" fill="#c9d9ee" stroke="#eee" strokeWidth="2" />{[[180, 579], [222, 579], [180, 621], [222, 621]].map(([x, y]) => <rect key={`${x}${y}`} x={x} y={y} width="6" height="6" fill="#000" />)}</C> },
  { el: <C y={672}><rect x="189" y="706" width="24" height="17" fill="#fbd265" stroke="#e99a10" strokeWidth="4" /><circle cx="210" cy="701" r="11" fill="#c9d9ee" stroke="#fff" strokeWidth="2" />{[[180, 684], [200, 684], [222, 684], [180, 704], [222, 704], [195, 711], [180, 726], [213, 726]].map(([x, y]) => <rect key={`${x}${y}`} x={x} y={y} width="6" height="6" fill="#000" />)}</C> },
  "sep",
];

function Commands() {
  return (
    <aside className="flex w-[60px] shrink-0 flex-col pl-[20px] pt-[3px]">
      {commands.map((t, i) =>
        t === "sep" ? (
          <div key={i} className="flex h-[14px] w-[36px] items-center"><div className="h-px w-full bg-[#2d2d2d]" /></div>
        ) : (
          <div key={i} className="flex h-[35px] w-[36px] items-center justify-center">{t.el}</div>
        )
      )}
      <div className="mt-[41px] flex w-[35px] justify-center"><RightArrow /></div>
    </aside>
  );
}

/* ---------- Snap bar ---------- */

const S = ({ children }: Kids) => <Ic s={24} vb="0 0 24 24">{children}</Ic>;

const SnapMain = () => (
  <S>
    <path d="M8 8L15 15" stroke="#000" strokeWidth="1.6" />
    <path d="M15.5 10.8V15.5H10.8Z" fill="#000" />
    <path d="M7 4L10 7L7 10L4 7Z" fill="#1414ff" /><rect x="6.2" y="6.2" width="1.6" height="1.6" fill="#2a2a90" />
    <path d="M17 13.8L20.2 17L17 20.2L13.8 17Z" fill="#1c7a24" /><circle cx="17" cy="17" r="1.4" fill="#2a5a70" />
  </S>
);
const Dot = ({ x, y, o = 1 }: { x: number; y: number; o?: number }) => (
  <g opacity={o}><circle cx={x} cy={y} r="2.4" fill="#1c7a24" /><circle cx={x} cy={y} r="1" fill="#2a6a60" /></g>
);

const snaps: Item[] = [
  { on: true, el: <SnapMain /> },
  "sep",
  { el: <SnapMain /> },
  { el: <S><path d="M17.5 5V17.5H4" stroke="#2f3c2f" strokeWidth="1" /></S> },
  { el: <S><path d="M17.5 4V17.5M4 17.5H17" stroke="#2b2b2b" strokeWidth="1" strokeDasharray="3 1" /><Dot x={17} y={17} o={0.28} /></S> },
  { el: <S><path d="M17.5 6V17.5H4" stroke="#2b2b2b" strokeWidth="1" strokeDasharray="3 1" /><Dot x={17} y={8} o={0.25} /></S> },
  { el: <S><path d="M17.5 4V17.5H4" stroke="#2b2b2b" strokeWidth="1" strokeDasharray="3 1" /><Dot x={8} y={8} o={0.28} /></S> },
  "sep",
  { on: true, el: <SnapMain /> },
  { el: <S><path d="M5 6C11 6 16 11 14 17M14 18C17 18 19 15 19.5 13M11 15.5L14 18.5L16 16" stroke="#1a7a22" strokeWidth="1.4" /></S> },
  { el: <S><path d="M5 18.5L19 5M5 14C10 15 15 9 19.5 9.5" stroke="#6a6a6a" strokeWidth="1.1" /><Dot x={12} y={12} /></S> },
  { on: true, el: <S><path d="M5 4.5C12 5 17 11 14 16M14 16C17 16 19 13 19.5 11" stroke="#6e6e6e" strokeWidth="1.2" /><Dot x={12} y={16.6} /></S> },
  { el: <S><path d="M5 5C9 5.5 16 9 15 15.5M13 17C17 17 19 14 19.5 11" stroke="#6e6e6e" strokeWidth="1.2" /><Dot x={12} y={6.5} /></S> },
  { el: <S><path d="M5 19L19 5" stroke="#777" strokeWidth="1.1" /><path d="M6 14V20M8.5 12V18M4.5 17L10 13M15.5 6V12M18 4V10M14 10.5L19 6.5" stroke="#b81818" strokeWidth="0.9" /><Dot x={12} y={12} /></S> },
  "sep",
  { on: true, el: <SnapMain /> },
  { el: <S><path d="M17.5 5V17.8H4" stroke="#545454" strokeWidth="1.4" /><Dot x={9.5} y={10.5} /></S> },
  { el: <S><path d="M17.3 5V17.8H4" stroke="#141414" strokeWidth="1.4" strokeDasharray="2 1" /><path d="M9.5 6.5V13.5M6 10H13" stroke="#0c0c0c" strokeWidth="1.2" /></S> },
  { el: <S><text x="6.2" y="18" fontFamily="DejaVu Serif, serif" fontWeight="bold" fontStyle="italic" fontSize="17" fill="#080808" stroke="#080808" strokeWidth="1">A</text><Dot x={7} y={17} /></S> },
  "sep",
  { el: <S><defs><linearGradient id="pg" x1="0" y1="0" x2="1" y2="1"><stop offset="0" stopColor="#c9c9c9" /><stop offset="1" stopColor="#fff" /></linearGradient></defs><rect x="6.5" y="4.7" width="10.5" height="14.5" fill="url(#pg)" stroke="#111" strokeWidth="0.8" /></S> },
  {
    on: true,
    el: (
      <S>
        <g fill="#0808f8" shapeRendering="crispEdges">
          {[5, 9, 13, 17].map((p) => <rect key={`v${p}`} x={p} y="4" width="1" height="16" />)}
          {[5, 9, 13, 17].map((p) => <rect key={`h${p}`} x="4" y={p} width="16" height="1" />)}
        </g>
        <g fill="#0808f8" opacity="0.45" shapeRendering="crispEdges">
          {[6, 10, 14, 18].map((p) => <rect key={`v${p}`} x={p} y="4" width="1" height="16" />)}
          {[6, 10, 14, 18].map((p) => <rect key={`h${p}`} x="4" y={p} width="16" height="1" />)}
        </g>
      </S>
    ),
  },
];

function SnapBar() {
  return (
    <aside className="flex w-[44px] shrink-0 flex-col pl-[4px] pt-[3px]">
      {snaps.map((t, i) =>
        t === "sep" ? (
          <div key={i} className="flex h-[14px] w-[36px] items-center"><div className="h-px w-full bg-[#2d2d2d]" /></div>
        ) : (
          <div key={i} className="flex h-[35px] w-[36px] items-center">
            <div className={`flex h-[34px] w-[36px] items-center justify-center rounded-[5px] ${t.on ? "bg-[#1d1d1d]" : ""}`}>{t.el}</div>
          </div>
        )
      )}
      <div className="-mt-px flex w-[35px] justify-center"><RightArrow /></div>
    </aside>
  );
}

/* ---------- Palette ---------- */

const palette = (
  "000000 1a1a1a 333333 4d4d4d 666666 808080 999999 b3b3b3 cccccc e6e6e6 ececec f2f2f2 f9f9f9 ffffff " +
  "800000 ff0000 808000 ffff00 008000 00ff00 008080 00ffff 000080 0000ff 800080 ff00ff " +
  "2b0000 550000 800000 aa0000 d40000 ff0000 ff2a2a ff5555 ff8080 ffaaaa ffd5d5 " +
  "280b0b 501616 782121 a02c2c c83737 d35f5f de8787 e9afaf f4d7d7 " +
  "241c1c 483737 6c5353 916f6f ac9393 c8b7b7 e3dbdb " +
  "2b1100 552200 803300 aa4400 d45500 ff6600 ff7f2a ff9955 ffb380 ffccaa ffe6d5 " +
  "28170b 502d16 784421 a05a2c c87137 d38d5f deaa87 e9c6af f4e3d7 " +
  "241f1c 483e37 6c5d53 917c6f ac9d93"
).split(" ");

function Palette() {
  return (
    <div className="flex h-[34px] shrink-0">
      <div className="w-[1491px] overflow-hidden bg-[#303030]">
        <div className="flex h-[20px] border-b border-[#1b1b1b] pl-[1px]">
          <div className="h-[19px] w-[19px] shrink-0 bg-white">
            <svg width="19" height="19" viewBox="0 0 19 19"><path d="M0 0L19 19M19 0L0 19" stroke="#7a0c0c" strokeWidth="1.6" /></svg>
          </div>
          {palette.map((c, i) => <div key={i} className="h-[19px] w-[19px] shrink-0" style={{ backgroundColor: `#${c}` }} />)}
        </div>
        <div className="ml-[4px] mt-[3px] h-[8px] w-[264px] rounded-full bg-[#a3a3a1]" />
      </div>
      <div className="flex flex-1 justify-center pt-[11px]">
        <svg width="7" height="12" viewBox="0 0 7 12"><path d="M6.5 0L0.5 6L6.5 12Z" fill="#eeeeec" /></svg>
      </div>
    </div>
  );
}

/* ---------- Bottom status ---------- */

function StatusBar() {
  return (
    <footer className="flex h-[35px] shrink-0 items-center whitespace-nowrap text-[#dededc]">
      <div className="w-[48.5px] shrink-0 text-right leading-[17px]"><div>Fill:</div><div>Stroke:</div></div>
      <div className="w-[109.5px] shrink-0 pl-[28px] leading-[17px]"><div>N/A</div><div>N/A</div></div>
      <span className="w-[16px] shrink-0 text-[#bcbcba]">O:</span>
      <Spin w="w-[118px]" bw="w-[35px]" value="100" />
      <div className="flex w-[5px] shrink-0 justify-center"><div className="h-[34px] w-px bg-[#2d2d2d]" /></div>
      <div className="flex w-[35px] shrink-0 justify-center pr-[2px]">
        <svg width="18" height="16" viewBox="0 0 18 16">
          <path d="M1 9C4 4.5 13 4.5 17 9C13 14 4 14 1 9Z" fill="#fff" stroke="#000" strokeWidth="1.4" />
          <circle cx="9.2" cy="9" r="3" fill="#000" /><circle cx="10" cy="8" r="0.9" fill="#fff" />
          <path d="M3 4.5L1.8 2.5M6 3.5L5.3 1M9 3V0.5M12.2 3.5L13 1M15 4.8L16.5 3" stroke="#000" strokeWidth="1.2" />
        </svg>
      </div>
      <div className="flex w-[36px] shrink-0 justify-center"><Lock /></div>
      <div className="flex h-[34px] w-[92px] shrink-0 items-center justify-center gap-[7px] rounded-[5px] border border-[#1b1b1b] bg-[#323232] text-[12px] font-bold text-[#eeeeec]">
        <span className="tracking-[-0.65px]">•Layer 1</span> <CaretDown />
      </div>
      <span className="w-[703px] shrink-0 pl-[1px] tracking-[-0.15px]">No objects selected. Click, Shift+click, Alt+scroll mouse on top of objects, or drag around objects to select.</span>
      <div className="h-[34px] w-px shrink-0 bg-[#2d2d2d]" />
      <div className="w-[26px] shrink-0 pl-[9px] leading-[17px]"><div>X:</div><div>Y:</div></div>
      <div className="w-[53px] shrink-0 text-right leading-[17px] tracking-[-0.5px]"><div>212.41</div><div>198.82</div></div>
      <span className="w-[34px] shrink-0 pl-[11px]">Z:</span>
      <Spin w="w-[99px]" bw="w-[22px]" value="62%" on />
      <span className="w-[34px] shrink-0 pl-[11px]">R:</span>
      <Spin w="w-[108px]" bw="w-[22px]" value="0.00°" on />
    </footer>
  );
}

export default function App() {
  return (
    <div className="relative flex h-[900px] w-[1600px] flex-col overflow-hidden">
      <Wallpaper />
      <TopBar />
      <main className={`${SANS} relative mx-[33px] mt-[13px] flex h-[857px] flex-col overflow-hidden border-[3px] border-[rgba(151,167,205,0.68)] bg-[#353535] bg-clip-padding text-[13.33px] leading-[16px] shadow-[0_0_6px_rgba(0,0,0,0.4)]`}>
        <MenuBar />
        <ToolControls />
        <div className="flex h-[715px] shrink-0">
          <Toolbox />
          <Work />
          <Commands />
          <SnapBar />
        </div>
        <Palette />
        <StatusBar />
      </main>
    </div>
  );
}
